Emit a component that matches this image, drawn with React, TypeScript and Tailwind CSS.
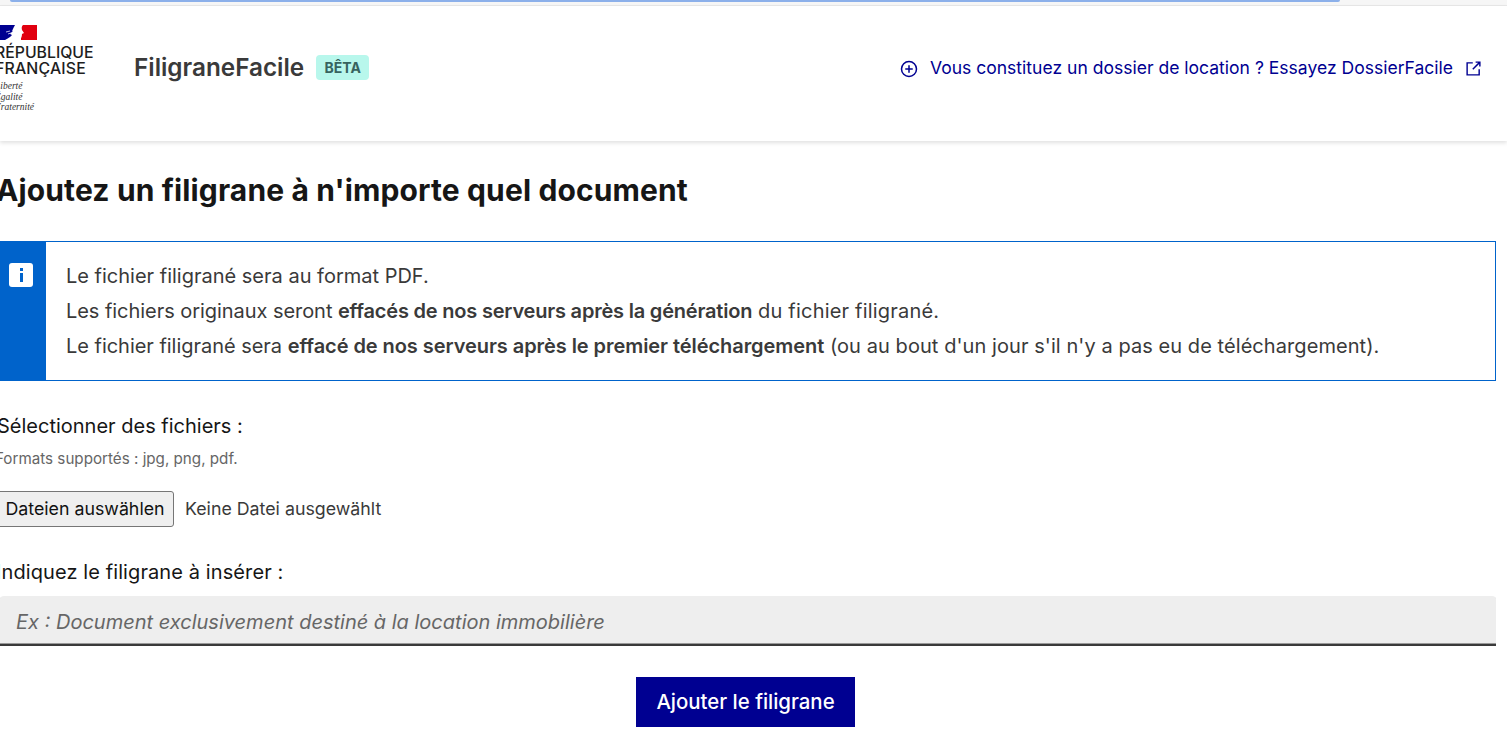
const font = "font-['Inter','Noto_Sans',sans-serif]";

function Marianne() {
  return (
    <svg width="42" height="15" viewBox="0 0 42 15" className="block">
      <rect x="0" y="0" width="20" height="15" fill="#000091" />
      <rect x="26" y="0" width="16" height="15" fill="#e1000f" />
      <path d="M20 0 H28 C26 2 27 4 27 5 L29 8 L27 9 C27 12 26 14 24 15 H10 C13 13 16 12 17 10 L15 9 C17 7 18 3 20 0Z" fill="#fff" />
      <path d="M10 8 L15 5 L18 6 L14 9 L16 10 L12 11Z" fill="#000091" />
      <path d="M11 7 L15 6 M13 9 L16 8" stroke="#fff" strokeWidth="0.7" />
    </svg>
  );
}

export default function App() {
  return (
    <div className={`w-[1507px] h-[744px] overflow-hidden bg-white text-[#161616] ${font}`}>
      {/* barre du haut */}
      <div className="h-[6px] bg-[#f6f6f6] border-b border-[#e8e8e8] pl-[10px]">
        <div className="h-[2px] w-[1330px] rounded-b-full bg-[#8cb0ea]" />
      </div>

      {/* Header */}
      <header className="h-[135px] flex items-center justify-between pr-[25px] pb-[13px] shadow-[0_2px_4px_rgba(0,0,0,0.12)]">
        <div className="flex items-center">
          <div className="w-[139px] -ml-[5px] mt-[4px]">
            <div className="mb-[5px]">
              <Marianne />
            </div>
            <div className="text-[15.8px] leading-[16px] font-medium text-[#1e1e1e]">
              RÉPUBLIQUE
              <br />
              <span className="tracking-[0.2px]">FRANÇAISE</span>
            </div>
            <div className="mt-[4px] font-['Liberation_Serif',serif] italic text-[9.5px] leading-[10.5px] text-[#333]">
              Liberté
              <br />
              Égalité
              <br />
              Fraternité
            </div>
          </div>
          <span className="text-[24.3px] font-semibold text-[#3a3a3a]">FiligraneFacile</span>
          <span className="ml-[12px] h-[25px] w-[53px] flex items-center justify-center rounded bg-[#b8f7ec] text-[14px] font-bold text-[#37635f]">
            BÊTA
          </span>
        </div>
        <a className="mt-[3px] flex items-center text-[17.55px] text-[#000091]">
          <svg width="18" height="18" viewBox="0 0 24 24" fill="none" stroke="currentColor" strokeWidth="2" className="mr-[12px]">
            <circle cx="12" cy="12" r="10" />
            <path d="M12 7v10M7 12h10" />
          </svg>
          Vous constituez un dossier de location ? Essayez DossierFacile
          <svg width="17" height="17" viewBox="0 0 24 24" fill="none" stroke="currentColor" strokeWidth="2" className="ml-[12px]">
            <path d="M11 4H3v17h17v-8" />
            <path d="M15 3h6v6M21 3l-10 10" />
          </svg>
        </a>
      </header>

      <main>
        <h1 className="mt-[29px] -ml-[4px] text-[30px] leading-[40px] font-bold tracking-[0.13px]">Ajoutez un filigrane à n'importe quel document</h1>

        {/* Alerte */}
        <div className="mt-[31px] w-[1496px] h-[140px] flex border border-[#0063cb]">
          <div className="w-[45px] bg-[#0063cb] flex justify-center pt-[21px] pr-[5px] shrink-0">
            <div className="w-[24px] h-[24px] rounded-[3px] bg-white flex flex-col items-center justify-center gap-[2px]">
              <div className="w-[3px] h-[3px] bg-[#0063cb]" />
              <div className="w-[3px] h-[9px] bg-[#0063cb]" />
            </div>
          </div>
          <div className="pl-[20px] pt-[17px] text-[20px] leading-[35px] text-[#3a3a3a]">
            <p>Le fichier filigrané sera au format PDF.</p>
            <p>
              <span className="tracking-[-0.05px]">Les fichiers originaux seront </span>
              <b className="font-semibold tracking-[-0.2px]">effacés de nos serveurs après la génération</b>
              <span className="tracking-[0.2px]"> du fichier filigrané.</span>
            </p>
            <p>
              <span className="tracking-[-0.03px]">Le fichier filigrané sera </span>
              <b className="font-semibold tracking-[-0.06px]">effacé de nos serveurs après le premier téléchargement</b>
              <span className="tracking-[0.07px]"> (ou au bout d'un jour s'il n'y a pas eu de téléchargement).</span>
            </p>
          </div>
        </div>

        {/* Formulaire */}
        <div className="mt-[30px] -ml-[3px] text-[20px] leading-[30px]">Sélectionner des fichiers :</div>
        <div className="mt-[8px] -ml-[5px] text-[15.2px] leading-[20px] text-[#666]">Formats supportés : jpg, png, pdf.</div>
        <div className="mt-[22px] flex items-center text-[17.8px]">
          <button className="-ml-[4px] h-[36px] w-[178px] rounded-[3px] border border-[#767676] bg-[#efefef] text-[#111]">Dateien auswählen</button>
          <span className="ml-[11px] text-[#3a3a3a]">Keine Datei ausgewählt</span>
        </div>
        <div className="mt-[30px] -ml-[4px] text-[20px] leading-[30px] tracking-[0.1px]">Indiquez le filigrane à insérer :</div>
        <div className="mt-[9px] w-[1496px] h-[50px] rounded-t-[4px] bg-[#eeeeee] border-b-2 border-[#3a3a3a] shadow-[inset_0_-1px_0_#999] pl-[16px] pt-[3px] flex items-center text-[20px] italic text-[#666]">
          Ex : Document exclusivement destiné à la location immobilière
        </div>
        <div className="mt-[31px] flex justify-center w-[1491px]">
          <button className="h-[50px] w-[219px] bg-[#000091] text-white text-[20.4px] font-medium">Ajouter le filigrane</button>
        </div>
      </main>
    </div>
  );
}
